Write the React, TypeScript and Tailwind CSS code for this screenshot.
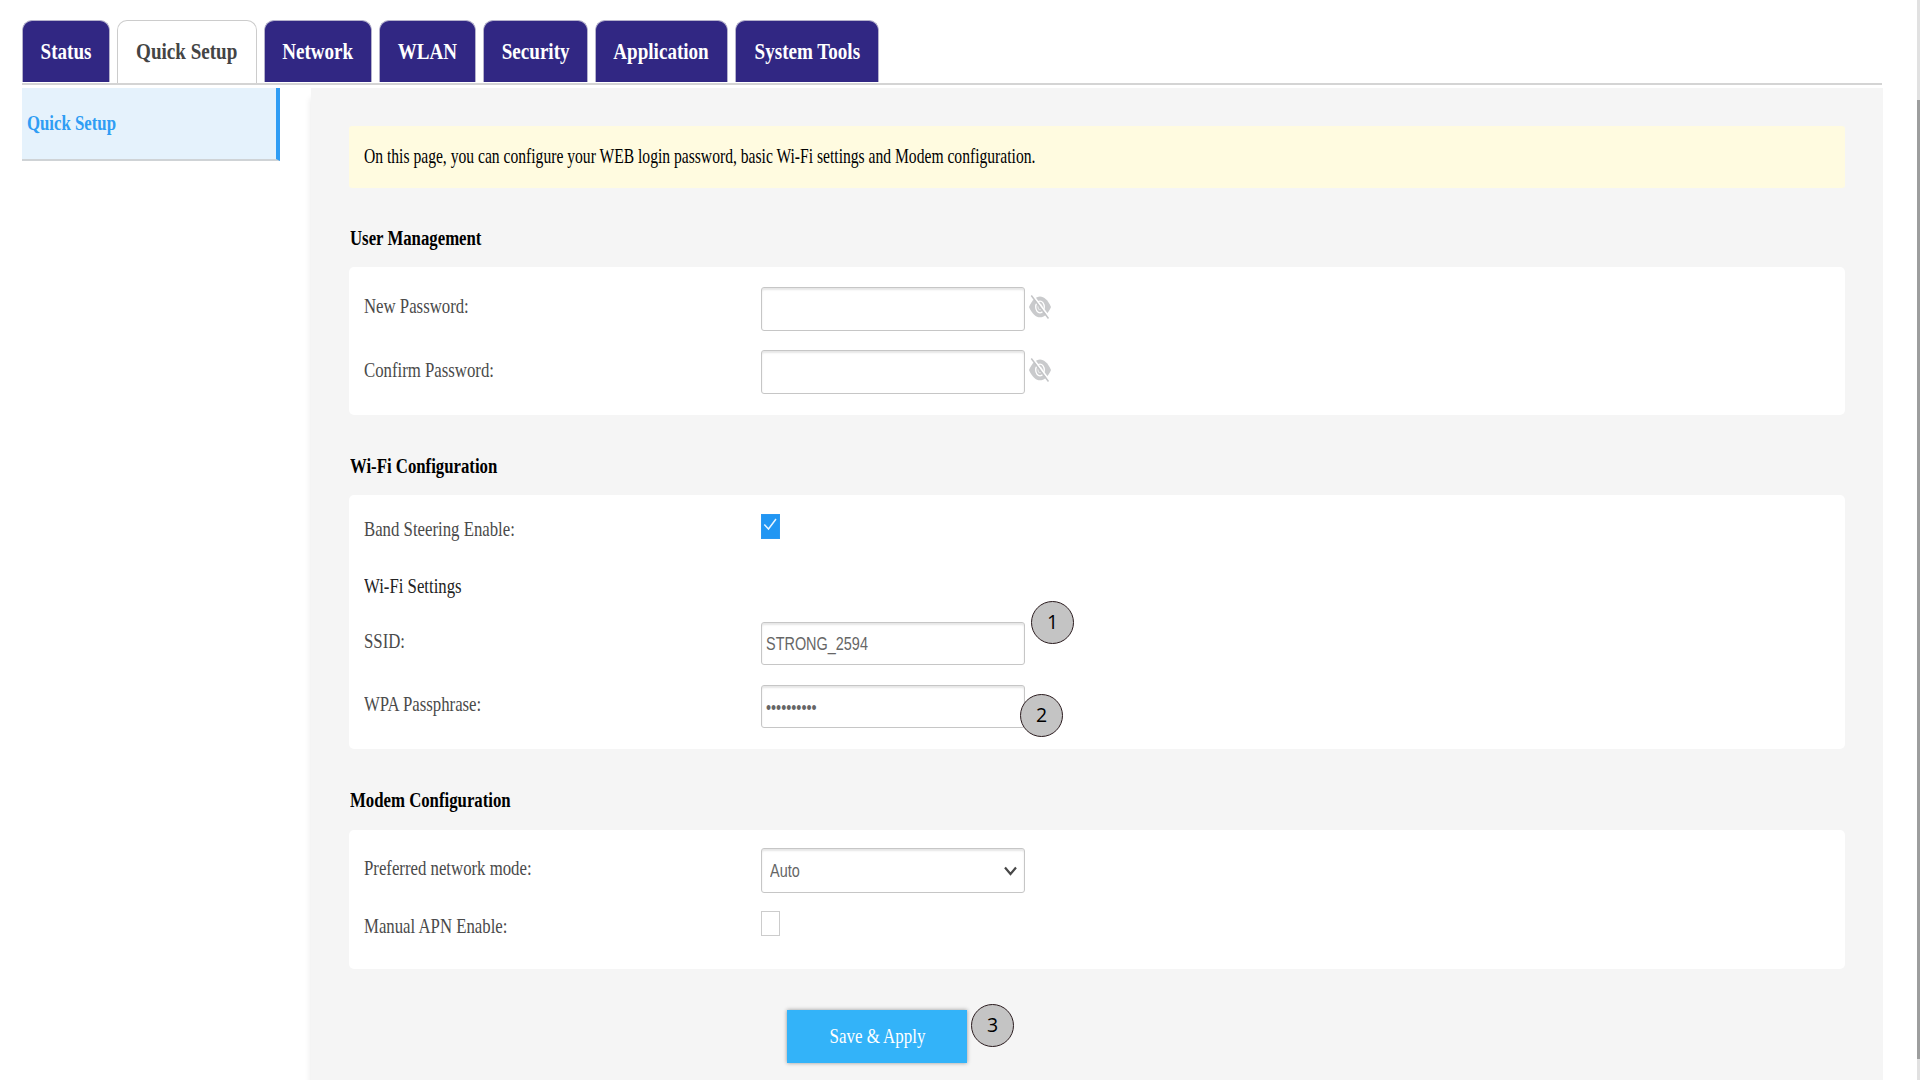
import { useState, type ReactNode } from "react"
import clsx from "clsx"

const tabs = [
  { name: "Status", width: "w-[88px]" },
  { name: "Quick Setup", width: "w-[140px]" },
  { name: "Network", width: "w-[108px]" },
  { name: "WLAN", width: "w-[97px]" },
  { name: "Security", width: "w-[105px]" },
  { name: "Application", width: "w-[133px]" },
  { name: "System Tools", width: "w-[144px]" },
]

// condensed serif text, 22px high and about 16.7px wide
function Label({ children, scale = "scale-x-[0.773]", className }: {
  children: ReactNode
  scale?: string
  className?: string
}) {
  return (
    <span
      className={clsx("inline-block origin-left whitespace-nowrap text-[21.7px] leading-7", scale, className)}
    >
      {children}
    </span>
  )
}

function Row({ label, className, labelClass = "pb-[6px]", children }: {
  label: string
  className?: string
  labelClass?: string
  children: ReactNode
}) {
  return (
    <div className={clsx("flex items-center", className)}>
      <div className={clsx("w-[397px] shrink-0 text-[#4a4a4a]", labelClass)}>
        <Label className="align-top">{label}</Label>
      </div>
      {children}
    </div>
  )
}

function TextField({ type = "text", initial = "" }: { type?: string; initial?: string }) {
  const [value, setValue] = useState(initial)
  return (
    <div
      className={clsx(
        "h-full w-[264px] overflow-hidden rounded-[3px] border border-[#c6c6c6] bg-white pl-1 shadow-[inset_0_2px_2px_rgba(0,0,0,0.1)]",
        type === "password" ? "pt-[2px]" : "pt-px"
      )}
    >
      <input
        type={type}
        value={value}
        onChange={(e) => setValue(e.target.value)}
        className="h-full w-[330px] origin-left scale-x-[0.76] bg-transparent font-['Liberation_Sans',sans-serif] text-[19px] text-[#666] outline-none"
      />
    </div>
  )
}

function HiddenEye() {
  return (
    <svg viewBox="0 0 22 24" className="ml-1 mb-1 h-6 w-[22px]" fill="none">
      <path d="M0 12C3 5 7 1.500 11 1.500S19 5 22 12C19 19 15 22.300 11 22.300S3 19 0 12Z" fill="#c9cacc" />
      <ellipse cx="11" cy="12" rx="4.300" ry="5.800" stroke="#fff" strokeWidth="1.300" />
      <ellipse cx="11" cy="12" rx="2" ry="2.900" stroke="#eee" strokeWidth="0.900" />
      <path d="M3.600 0L21 23" stroke="#fff" strokeWidth="2" />
      <path d="M2.300 0.500L19.500 23.500" stroke="#c3c4c6" strokeWidth="1.500" />
    </svg>
  )
}

function Title({ children, className }: { children: ReactNode; className?: string }) {
  return (
    <h2 className={clsx("h-7 pl-px font-bold text-black", className)}>
      <Label className="align-top">{children}</Label>
    </h2>
  )
}

function Marker({ n, className }: { n: number; className: string }) {
  return (
    <div
      className={clsx(
        "absolute flex size-[43px] items-center justify-center rounded-full border border-[#2a1b1e] bg-[#c4c4c4] pb-[2px] font-['Open_Sans',sans-serif] text-[19.5px] leading-none text-black",
        className
      )}
    >
      {n}
    </div>
  )
}

export default function App() {
  const [active, setActive] = useState("Quick Setup")
  const [steering, setSteering] = useState(true)
  const [manualApn, setManualApn] = useState(false)

  return (
    <div className="relative flex h-[1080px] w-[1920px] justify-between overflow-hidden bg-white font-['Liberation_Serif',serif]">
      <div className="ml-[22px] w-[1861px]">
        <nav className="flex h-[85px] w-[1860px] items-start gap-x-[7px] border-b-2 border-[#d4d4d4] pt-5">
          {tabs.map((tab) => (
            <button
              key={tab.name}
              onClick={() => setActive(tab.name)}
              className={clsx(
                "flex shrink-0 items-center justify-center rounded-t-[10px] border border-b-0 text-[24px] font-bold",
                tab.width,
                tab.name === active
                  ? "h-[63px] border-[#ccc] bg-white pb-[3px] text-[#444]"
                  : "h-[62px] border-[#b5b2cc] bg-[#312783] pb-[2px] text-white"
              )}
            >
              <span className="scale-x-[0.795] whitespace-nowrap">{tab.name}</span>
            </button>
          ))}
        </nav>

        <div className="mt-[3px] flex h-[992px] items-start gap-x-[31px]">
          <aside className="flex h-[73px] w-[258px] items-center border-b-2 border-r-4 border-b-[#cfd3d6] border-r-[#2f9df4] bg-[#e5f2fc] pb-[2px] pl-[5px]">
            <Label className="font-bold text-[#2f9df4]">Quick Setup</Label>
          </aside>

          <main className="h-full w-[1572px] bg-[#f5f5f5] px-[38px] pt-[38px] shadow-[-3px_8px_6px_-2px_rgba(0,0,0,0.08)]">
            <div className="flex h-[62px] items-center rounded-[3px] bg-[#fffbe0] pb-[2px] pl-[15px] text-black">
              <Label scale="scale-x-[0.7195]">
                On this page, you can configure your WEB login password, basic Wi-Fi settings and Modem configuration.
              </Label>
            </div>

            <Title className="mt-9">User Management</Title>
            <section className="mt-[15px] h-[148px] rounded-[5px] bg-white pl-[15px] pt-5">
              <Row label="New Password:" className="h-[44px]">
                <TextField type="password" />
                <HiddenEye />
              </Row>
              <Row label="Confirm Password:" className="mt-[19px] h-[44px]" labelClass="pb-1">
                <TextField type="password" />
                <HiddenEye />
              </Row>
            </section>

            <Title className="mt-[37px]">Wi-Fi Configuration</Title>
            <section className="mt-[15px] h-[254px] rounded-[5px] bg-white pl-[15px] pt-[18px]">
              <Row label="Band Steering Enable:" className="h-[26px]" labelClass="pt-[5px]">
                <button
                  onClick={() => setSteering(!steering)}
                  className={clsx("h-[25px] w-[19px] border", steering ? "border-[#2a98f2] bg-[#2196f3]" : "border-[#ccc] bg-white")}
                >
                  {steering && (
                    <svg viewBox="0 0 17 23" className="h-[23px] w-[17px]" fill="none">
                      <path d="M2.300 9.500L6.500 14L14 4" stroke="#e8f4ff" strokeWidth="1.500" />
                    </svg>
                  )}
                </button>
              </Row>
              <div className="mt-[33px] h-7 text-[#222]">
                <Label className="align-top">Wi-Fi Settings</Label>
              </div>
              <Row label="SSID:" className="mt-[22px] h-[43px]">
                <TextField initial="STRONG_2594" />
              </Row>
              <Row label="WPA Passphrase:" className="mt-5 h-[43px]">
                <TextField type="password" initial="0123456789" />
              </Row>
            </section>

            <Title className="mt-[37px]">Modem Configuration</Title>
            <section className="mt-4 h-[139px] rounded-[5px] bg-white pl-[15px] pt-[18px]">
              <Row label="Preferred network mode:" className="h-[45px]">
                <div className="flex h-full w-[264px] items-center justify-between rounded-[3px] border border-[#c6c6c6] pl-2 pr-[7px] shadow-[inset_0_2px_2px_rgba(0,0,0,0.1)]">
                  <span className="origin-left scale-x-[0.76] pt-[2px] font-['Liberation_Sans',sans-serif] text-[19px] text-[#666]">
                    Auto
                  </span>
                  <svg viewBox="0 0 13 10" className="mt-[1px] h-[10px] w-[13px]" fill="none">
                    <path d="M1 1.500L6.500 8L12 1.500" stroke="#484848" strokeWidth="2.200" />
                  </svg>
                </div>
              </Row>
              <Row label="Manual APN Enable:" className="mt-[18px] h-[25px]" labelClass="pt-[5px]">
                <button
                  onClick={() => setManualApn(!manualApn)}
                  className={clsx("h-[25px] w-[19px] border border-[#ccc]", manualApn ? "bg-[#2196f3]" : "bg-white")}
                />
              </Row>
            </section>

            <button className="ml-[438px] mt-[41px] flex h-[53px] w-[180px] items-center justify-center bg-[#33b3f9] text-[21.7px] text-white shadow-[0_0_4px_rgba(0,0,0,0.4)]">
              <span className="scale-x-[0.78] whitespace-nowrap">Save &amp; Apply</span>
            </button>
          </main>
        </div>
      </div>

      {/* scrollbar */}
      <div className="h-full w-[3px] bg-[#e1e1e1] pt-[100px]">
        <div className="h-[959px] bg-[#9d9e9e]" />
      </div>

      <Marker n={1} className="left-[1031px] top-[601px]" />
      <Marker n={2} className="left-[1020px] top-[694px]" />
      <Marker n={3} className="left-[971px] top-[1004px]" />
    </div>
  )
}
